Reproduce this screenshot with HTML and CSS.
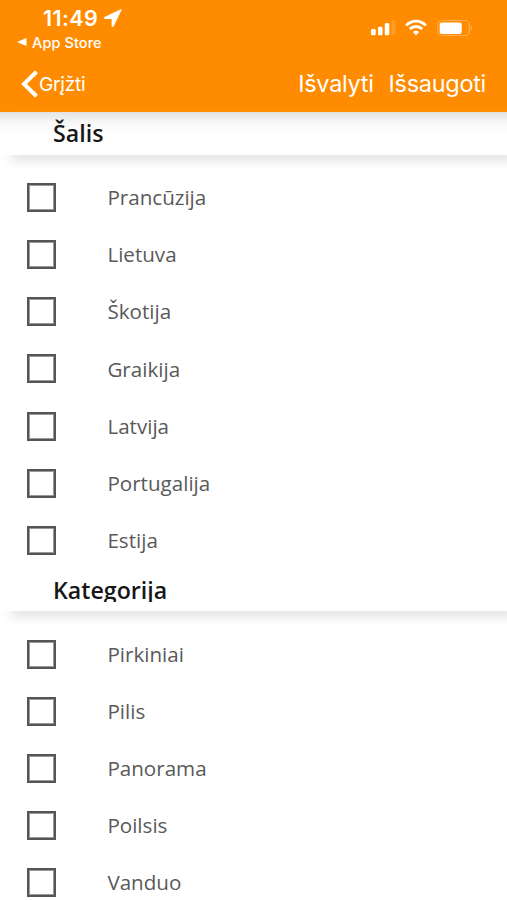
FILE: index.html
```
<!DOCTYPE html>
<html lang="lt">
<head>
<meta charset="utf-8">
<title>Filtrai</title>
<link rel="stylesheet" href="styles.css">
</head>
<body>
<header class="top">
  <div class="status">
    <div class="status-left">
      <div class="clock"><span class="time">11:49</span>
        <svg class="location" width="18" height="18" viewBox="0 0 18 18"><path d="M17 .8 .8 8.5q-.8.8.3 1H8.2V16.6q.3 1.2 1.1.2Z" fill="#fff" stroke="#fff" stroke-width="1.2" stroke-linejoin="round"/></svg>
      </div>
      <div class="return"><svg width="10" height="8" viewBox="0 0 10 8"><path d="M0 4 9.5 0v8Z" fill="#fff"/></svg><span>App Store</span></div>
    </div>
    <div class="status-right">
      <svg width="26" height="18" viewBox="0 0 26 18" fill="#fff"><rect x="1" y="10" width="4.7" height="6.2" rx="1.3"/><rect x="8" y="7.8" width="4.5" height="8.4" rx="1.3"/><rect x="14.8" y="4" width="4.5" height="12.2" rx="1.3"/><rect x="21.5" y="1" width="4" height="15.2" rx="1.3" opacity=".15"/></svg>
      <svg width="22" height="18" viewBox="0 0 22 18"><g fill="none" stroke="#fff" stroke-width="2.8"><path d="M1.2 6.4Q5.5 2.2 11 2.2T20.8 6.4"/><path d="M4.8 10Q7.5 7.5 11 7.5T17.2 10"/></g><path d="M7.8 13Q11 10.4 14.2 13L11 16.2Z" fill="#fff"/></svg>
      <svg width="36" height="18" viewBox="0 0 36 18"><rect x=".8" y="1.5" width="31.5" height="15" rx="4" fill="none" stroke="#fff" stroke-width="1.2" opacity=".3"/><rect x="2.7" y="3.4" width="22" height="11.6" rx="2" fill="#fff"/><path d="M33.6 6.4q3.2 2.6 0 5.2Z" fill="#fff" opacity=".3"/></svg>
    </div>
  </div>
  <nav class="nav">
    <a class="back"><svg width="18" height="28" viewBox="0 0 18 28"><path d="M15.5 1.8 3 14 15.5 26.2" fill="none" stroke="#fff" stroke-width="4"/></svg><span>Grįžti</span></a>
    <div class="actions"><a class="clear">Išvalyti</a><a class="save">Išsaugoti</a></div>
  </nav>
</header>
<main>
  <section>
    <div class="group first"><h2>Šalis</h2></div>
    <label class="row"><i class="box"></i><span>Prancūzija</span></label>
    <label class="row"><i class="box"></i><span>Lietuva</span></label>
    <label class="row"><i class="box"></i><span>Škotija</span></label>
    <label class="row"><i class="box"></i><span>Graikija</span></label>
    <label class="row"><i class="box"></i><span>Latvija</span></label>
    <label class="row"><i class="box"></i><span>Portugalija</span></label>
    <label class="row"><i class="box"></i><span>Estija</span></label>
  </section>
  <section>
    <div class="group"><h2>Kategorija</h2></div>
    <label class="row"><i class="box"></i><span>Pirkiniai</span></label>
    <label class="row"><i class="box"></i><span>Pilis</span></label>
    <label class="row"><i class="box"></i><span>Panorama</span></label>
    <label class="row"><i class="box"></i><span>Poilsis</span></label>
    <label class="row"><i class="box"></i><span>Vanduo</span></label>
  </section>
</main>
</body>
</html>
```
FILE: styles.css
```
* { box-sizing: border-box; }
body {
  margin: 0;
  height: 900px;
  overflow: hidden;
  background: #fff;
  font-family: "Open Sans", sans-serif;
}
.top {
  height: 112px;
  background: #ff8c00;
  color: #fff;
  font-family: Inter, "Liberation Sans", sans-serif;
}
.status {
  display: flex;
  justify-content: space-between;
  height: 56px;
  padding: 5px 34.5px 0 17px;
}
.clock {
  display: flex;
  align-items: center;
  height: 25px;
  padding-left: 26px;
  gap: 6px;
}
.time { font-size: 21.5px; font-weight: 600; letter-spacing: .4px; }
.return {
  display: flex;
  align-items: center;
  gap: 5px;
  height: 24px;
  font-size: 14.5px;
  font-weight: 500;
  letter-spacing: .1px;
}
.status-right { display: flex; gap: 9.5px; padding-top: 13.5px; }
.nav {
  display: flex;
  align-items: center;
  justify-content: space-between;
  height: 56px;
  padding: 0 21px;
}
.back { display: flex; align-items: center; font-size: 19.3px; letter-spacing: -.3px; }
.actions { display: flex; gap: 15px; padding-bottom: 2px; font-size: 23.5px; letter-spacing: -.3px; }
.group {
  height: 42.6px;
  margin-bottom: 14.5px;
  padding: 7px 0 0 53px;
  box-shadow: 10px 8px 10px -1px #e6e6e6;
}
.first {
  background: linear-gradient(to bottom, #e6e0da, #e6eaec 3px, #eceeef 6px, #f7f7f7 10px, #fff 22px);
}
h2 {
  margin: 0;
  height: 26px;
  overflow: hidden;
  color: #171717;
  font-size: 23.2px;
  font-weight: 600;
  line-height: 28px;
}
.first h2 { overflow: visible; }
.row {
  display: flex;
  align-items: center;
  height: 57.1px;
  padding-left: 26.6px;
  color: #595959;
  font-size: 20.6px;
}
.row span { padding-bottom: .8px; }
.box {
  width: 29px;
  height: 29px;
  margin-right: 51.8px;
  border: 2px solid #555;
  box-shadow: inset 0 0 0 1px #999;
}
```
